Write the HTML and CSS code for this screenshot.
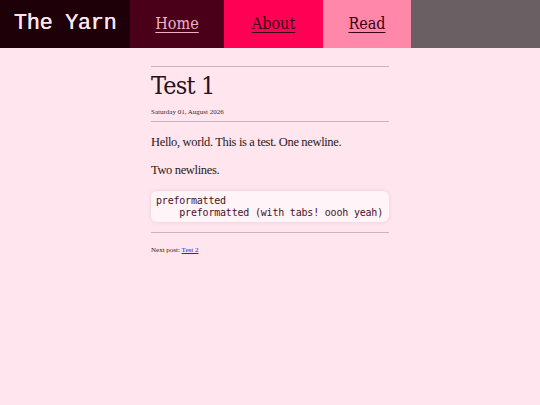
FILE: index.html
```html
<!DOCTYPE html>
<html>
<head>
<meta charset="utf-8">
<link rel="stylesheet" href="styles.css">
</head>
<body>
<header class="topbar">
  <div class="brand">The Yarn</div>
  <a class="nav nav-home" href="#">Home</a>
  <a class="nav nav-about" href="#">About</a>
  <a class="nav nav-read" href="#">Read</a>
  <div class="filler"></div>
</header>
<main class="post">
  <hr class="rule">
  <h1 class="title">Test 1</h1>
  <div class="date">Saturday 01, August 2026</div>
  <hr class="rule">
  <p class="para">Hello, world. This is a test. One newline.</p>
  <p class="para">Two newlines.</p>
  <pre class="code">preformatted
    preformatted (with tabs! oooh yeah)</pre>
  <hr class="rule rule-after">
  <div class="next">Next post: <a href="#">Test 2</a></div>
</main>
</body>
</html>
```

FILE: styles.css
```css
html, body {
  margin: 0;
  padding: 0;
  background: #ffe6ee;
}
body {
  font-family: "Liberation Serif", serif;
  color: #2a1820;
}
.topbar {
  display: flex;
  height: 48px;
}
.brand {
  width: 130px;
  background: #1e0008;
  color: #ffe6ee;
  font-family: "Liberation Mono", monospace;
  font-size: 22px;
  letter-spacing: -0.4px;
  text-shadow: 0.3px 0 0 #ffe6ee;
  display: flex;
  align-items: center;
  justify-content: center;
  padding-bottom: 2px;
  box-sizing: border-box;
}
.nav {
  display: flex;
  align-items: center;
  justify-content: center;
  font-family: "DejaVu Serif", serif;
  font-size: 16px;
  font-stretch: condensed;
  text-decoration: underline;
  text-decoration-thickness: 1px;
  text-underline-offset: 3px;
  padding-bottom: 1px;
  box-sizing: border-box;
}
.nav-home { width: 94px; background: #4a0018; color: #eeb0c6; }
.nav-about { width: 99px; background: #ff0055; color: #3a0012; }
.nav-read { width: 88px; background: #ff88aa; color: #3a0012; }
.filler { flex: 1; background: #6a6064; }
.post {
  width: 238px;
  margin: 0 auto;
  padding-top: 18px;
}
.rule {
  border: 0;
  border-top: 1px solid #c8b4bc;
  margin: 0;
}
.title {
  font-family: "DejaVu Serif", serif;
  font-stretch: condensed;
  font-weight: normal;
  font-size: 25px;
  margin: 4px 0 0;
  line-height: 30px;
  color: #2a1018;
  letter-spacing: -0.8px;
}
.date {
  font-size: 7px;
  margin: 7px 0 5px;
  color: #3a2a30;
}
.para {
  font-size: 12.5px;
  letter-spacing: -0.35px;
  margin: 12px 0 0;
  line-height: 17px;
}
.para + .para {
  margin-top: 11px;
}
.code {
  margin: 12px 0 10px;
  background: #fff4f7;
  border-radius: 6px;
  box-shadow: 0 0 4px rgba(200, 150, 170, 0.35);
  padding: 4px 5px 3px;
  font-family: "DejaVu Sans Mono", monospace;
  font-size: 10px;
  letter-spacing: -0.2px;
  line-height: 12px;
  color: #4a1028;
}
.next {
  font-size: 7px;
  margin-top: 13px;
}
.next a {
  color: #2222dd;
}
```
